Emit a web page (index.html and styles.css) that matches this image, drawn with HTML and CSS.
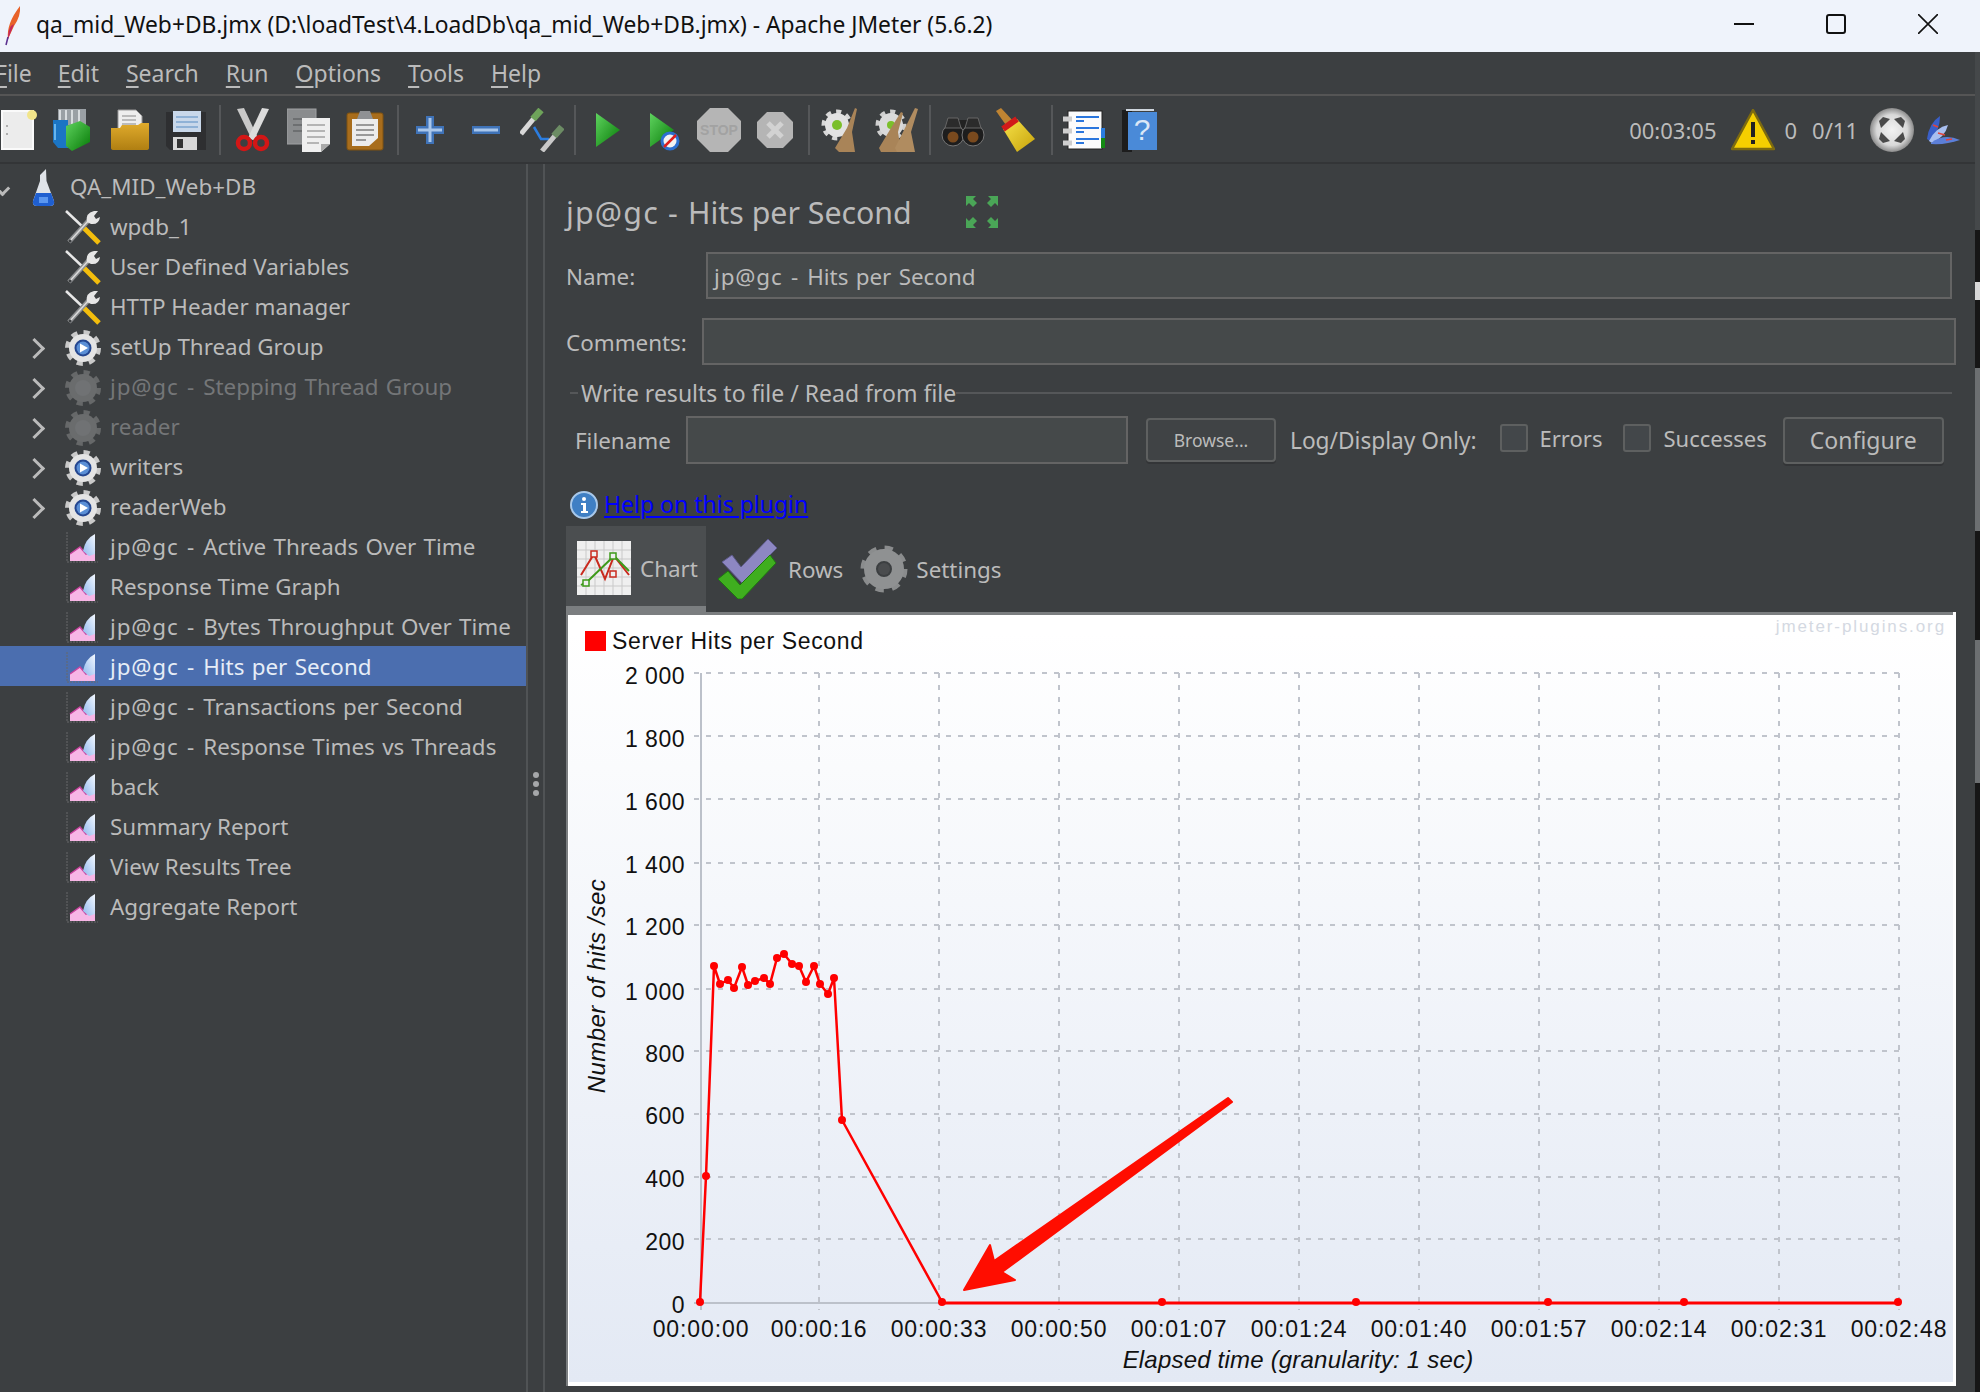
FILE: index.html
```html
<!DOCTYPE html>
<html lang="en">
<head>
	<meta charset="UTF-8">
	<title>qa_mid_Web+DB.jmx - Apache JMeter (5.6.2)</title>
	<link rel="stylesheet" href="styles.css">
</head>
<body>
<svg class="defs" width="0" height="0">
	<defs>
		<linearGradient id="gChart" x1="0" y1="0" x2="0" y2="1"><stop offset="0" stop-color="#fff"/><stop offset="1" stop-color="#e3e9f4"/></linearGradient>
		<linearGradient id="gGreen" x1="0" y1="0" x2="1" y2="1"><stop offset="0" stop-color="#5fd35f"/><stop offset="1" stop-color="#067a06"/></linearGradient>
		<linearGradient id="gFolder" x1="0" y1="0" x2="0" y2="1"><stop offset="0" stop-color="#e0ab2c"/><stop offset="1" stop-color="#b07f12"/></linearGradient>
		<linearGradient id="gFeather" x1="0" y1="1" x2="1" y2="0"><stop offset="0" stop-color="#8fb8ee"/><stop offset="1" stop-color="#f4f8ff"/></linearGradient>
		<radialGradient id="gBall"><stop offset="0" stop-color="#f2f2f2"/><stop offset=".7" stop-color="#d8d8d8"/><stop offset="1" stop-color="#8b8b8b"/></radialGradient>
		<linearGradient id="gBroom" x1="0" y1="0" x2="1" y2="1"><stop offset="0" stop-color="#f7e34a"/><stop offset="1" stop-color="#c7a20a"/></linearGradient>

		<symbol id="i-flask" viewBox="0 0 25 38">
			<path d="M15 0 L15.5 12 L23 32 Q24 37 19 37 H6 Q1 37 2 32 L9 12 V6 Z" fill="#dfe3e8"/>
			<path d="M5 24 H20 L23 32 Q24 37 19 37 H6 Q1 37 2 32 Z" fill="#1f5fd0"/>
			<path d="M8 28 h9 v6 h-9z" fill="#5b97ef"/>
		</symbol>
		<symbol id="i-tools" viewBox="0 0 36 36">
			<path d="M1 1 L20 19" stroke="#e8e8e8" stroke-width="2.5"/>
			<path d="M19 18 L34 33" stroke="#f3bd0c" stroke-width="5"/>
			<path d="M4 32 L24 10" stroke="#8d8f91" stroke-width="4.5"/>
			<path d="M4 32 L24 10" stroke="#dcdcdc" stroke-width="1.5"/>
			<path d="M22 12 Q20 3 29 1 L33 1 L29 6 L31 9 L35 7 Q34 15 26 14 Z" fill="#e6e6e6"/>
			<circle cx="5" cy="31" r="1.5" fill="#3c3f41"/>
		</symbol>
		<symbol id="i-gear" viewBox="0 0 36 36">
			<circle cx="18" cy="18" r="15.5" fill="none" stroke="#c9c9c9" stroke-width="5" stroke-dasharray="6.09 6.09"/>
			<circle cx="18" cy="18" r="14" fill="#e4e4e4"/>
			<circle cx="18" cy="18" r="8.5" fill="#24468f"/>
			<circle cx="18" cy="18" r="6.5" fill="#5a8fd6"/>
			<path d="M15 13.5 L23 18 L15 22.5 Z" fill="#fff"/>
		</symbol>
		<symbol id="i-gear-off" viewBox="0 0 36 36">
			<circle cx="18" cy="18" r="15.5" fill="none" stroke="#666869" stroke-width="5" stroke-dasharray="6.09 6.09"/>
			<circle cx="18" cy="18" r="14" fill="#6a6c6d"/>
			<circle cx="18" cy="18" r="8" fill="#707274"/>
		</symbol>
		<symbol id="i-graph" viewBox="0 0 36 36">
			<path d="M2 2 V32 H33" fill="none" stroke="#66686a" stroke-width="1" stroke-dasharray="2 1"/>
			<path d="M5 31 V24 L15 17 L21 24 L30 20 V31 Z" fill="#f7b6e6"/>
			<path d="M5 24 L15 17 L21 24 L30 20" fill="none" stroke="#c9439f" stroke-width="1.5"/>
			<path d="M18 21 Q20 9 30 4 V24 L24 26 Z" fill="url(#gFeather)"/>
		</symbol>

		<symbol id="t-new" viewBox="0 0 44 44">
			<rect x="5" y="3" width="31" height="38" fill="#ececec" stroke="#fafafa" stroke-width="2"/>
			<circle cx="35" cy="7" r="5" fill="#f2e58a"/>
			<circle cx="10" cy="18" r="1" fill="#999"/><circle cx="10" cy="26" r="1" fill="#999"/>
		</symbol>
		<symbol id="t-templates" viewBox="0 0 44 44">
			<rect x="8" y="1" width="28" height="16" fill="#9aa0a5"/>
			<path d="M10 2v14M16 2v14M22 2v14M29 2v14" stroke="#d8dcdf" stroke-width="2"/>
			<path d="M3 12 L18 12 L18 40 L8 40 L3 34 Z" fill="#1b75c4"/>
			<path d="M5 16 V32" stroke="#66b5ef" stroke-width="2"/>
			<path d="M16 18 L30 13 L40 19 V34 L22 43 L16 38 Z" fill="url(#gGreen)"/>
		</symbol>
		<symbol id="t-open" viewBox="0 0 44 44">
			<path d="M10 2 H28 L34 8 V24 H10 Z" fill="#eee" stroke="#999"/>
			<path d="M14 8h14M14 12h14M14 16h14" stroke="#aaa" stroke-width="1.5"/>
			<path d="M3 40 L3 20 H12 L14 17 H30 L33 15 H41 V40 Q41 42 38 42 H6 Q3 42 3 40 Z" fill="url(#gFolder)"/>
		</symbol>
		<symbol id="t-save" viewBox="0 0 44 44">
			<path d="M2 4 H42 V42 H6 L2 38 Z" fill="#2e2f31"/>
			<rect x="9" y="3" width="28" height="21" fill="#c9d8ea"/>
			<path d="M12 9h22M12 14h22M12 19h22" stroke="#7ea5cf" stroke-width="1.5"/>
			<rect x="9" y="29" width="24" height="13" fill="#d8d8d8"/>
			<rect x="13" y="31" width="6" height="9" fill="#333"/>
		</symbol>
		<symbol id="t-cut" viewBox="0 0 44 44">
			<path d="M6 1 L13 0 L27 30 L21 32 Z" fill="#c9c9c9"/>
			<path d="M38 1 L31 0 L17 30 L23 32 Z" fill="#dcdcdc"/>
			<circle cx="13" cy="35" r="6" fill="none" stroke="#d31616" stroke-width="4.5"/>
			<circle cx="30" cy="35" r="6" fill="none" stroke="#d31616" stroke-width="4.5"/>
		</symbol>
		<symbol id="t-copy" viewBox="0 0 44 44">
			<rect x="0" y="1" width="29" height="35" fill="#8a8c8e" stroke="#9fa1a3"/>
			<path d="M6 11h16M6 17h16M6 23h16" stroke="#6d6f71" stroke-width="2"/>
			<path d="M15 10 H43 V36 L34 44 H15 Z" fill="#efefef"/>
			<path d="M20 17h18M20 23h18M20 29h18M20 35h12" stroke="#b5b5b5" stroke-width="2"/>
			<path d="M34 44 V36 H43 Z" fill="#aaa"/>
		</symbol>
		<symbol id="t-paste" viewBox="0 0 44 44">
			<rect x="4" y="5" width="36" height="37" rx="2" fill="#a86d1c" stroke="#7f5210"/>
			<path d="M9 11 H35 V30 L26 38 H9 Z" fill="#ececec"/>
			<path d="M13 17h18M13 22h18M13 27h18M13 32h10" stroke="#999" stroke-width="2"/>
			<path d="M14 11 L17 3 H27 L30 11 Z" fill="#8f9194"/>
		</symbol>
		<symbol id="t-plus" viewBox="0 0 44 44">
			<path d="M22 8 V36 M8 22 H36" stroke="#3f73b8" stroke-width="8"/>
			<path d="M22 10 V34 M10 22 H34" stroke="#a9c6ea" stroke-width="3"/>
		</symbol>
		<symbol id="t-minus" viewBox="0 0 44 44">
			<path d="M8 22 H36" stroke="#3f73b8" stroke-width="8"/>
			<path d="M10 22 H34" stroke="#a9c6ea" stroke-width="3"/>
		</symbol>
		<symbol id="t-toggle" viewBox="0 0 44 44">
			<path d="M1 26 L15 9" stroke="#d8d8d8" stroke-width="5"/>
			<path d="M13 11 L21 2" stroke="#6ea35a" stroke-width="7"/>
			<path d="M14 19 L21 31 H29" fill="none" stroke="#2b7de0" stroke-width="2.5"/>
			<path d="M22 43 L38 24" stroke="#c9c9c9" stroke-width="5"/>
			<path d="M34 28 L42 19" stroke="#6c8c64" stroke-width="7"/>
		</symbol>
		<symbol id="t-run" viewBox="0 0 44 44">
			<path d="M10 5 L34 22 L10 39 Z" fill="url(#gGreen)"/>
		</symbol>
		<symbol id="t-runnp" viewBox="0 0 44 44">
			<path d="M8 5 L32 22 L8 39 Z" fill="url(#gGreen)"/>
			<circle cx="28" cy="33" r="8" fill="#f2f2f2" stroke="#2c6fd0" stroke-width="3"/>
			<path d="M22 39 L34 27" stroke="#e01e1e" stroke-width="2.5"/>
		</symbol>
		<symbol id="t-stop" viewBox="0 0 44 44">
			<path d="M13 0 H31 L44 13 V31 L31 44 H13 L0 31 V13 Z" fill="#b5b5b5"/>
			<text x="22" y="27" text-anchor="middle" class="stop-label">STOP</text>
		</symbol>
		<symbol id="t-shut" viewBox="0 0 44 44">
			<path d="M14 4 H30 L40 14 V30 L30 40 H14 L4 30 V14 Z" fill="#b5b5b5"/>
			<path d="M15 15 L29 29 M29 15 L15 29" stroke="#d2d2d2" stroke-width="5"/>
		</symbol>
		<symbol id="t-clear" viewBox="0 0 44 44">
			<circle cx="18" cy="17" r="13" fill="none" stroke="#d8d8d8" stroke-width="5" stroke-dasharray="5 5"/>
			<circle cx="18" cy="17" r="12" fill="#e2e2e2"/>
			<circle cx="18" cy="17" r="5" fill="#7bbf2a"/>
			<path d="M16 40 L28 20 L36 0 L38 1 L33 24 L36 44 H20 Z" fill="#a98458"/>
		</symbol>
		<symbol id="t-clearall" viewBox="0 0 44 44">
			<circle cx="16" cy="17" r="13" fill="none" stroke="#cfcfcf" stroke-width="5" stroke-dasharray="5 5"/>
			<circle cx="16" cy="17" r="12" fill="#dadada"/>
			<circle cx="16" cy="17" r="4" fill="#7bbf2a"/>
			<path d="M4 40 L16 20 L26 4 L28 5 L23 24 L26 44 H6 Z" fill="#a98458"/>
			<path d="M20 40 L30 20 L40 0 L43 1 L36 24 L40 44 H22 Z" fill="#b08c60"/>
		</symbol>
		<symbol id="t-binoc" viewBox="0 0 44 44">
			<path d="M16 12 H28 V26 H16 Z" fill="#222"/>
			<circle cx="12" cy="27" r="11" fill="#1d1d1d" stroke="#777" stroke-width="1"/>
			<circle cx="32" cy="27" r="11" fill="#1d1d1d" stroke="#777" stroke-width="1"/>
			<path d="M7 10 H17 L20 20 H4 Z M27 10 H37 L40 20 H24 Z" fill="#2b2b2b" stroke="#666" stroke-width="1"/>
			<circle cx="12" cy="29" r="5.5" fill="#7a4a1e"/><circle cx="32" cy="29" r="5.5" fill="#7a4a1e"/>
		</symbol>
		<symbol id="t-broom" viewBox="0 0 44 44">
			<path d="M3 3 L8 0 L22 15 L15 20 Z" fill="#bf8432"/>
			<path d="M10 21 L24 11 L42 31 L24 44 Z" fill="url(#gBroom)"/>
			<path d="M10 21 L24 11" stroke="#d11a1a" stroke-width="6"/>
		</symbol>
		<symbol id="t-log" viewBox="0 0 44 44">
			<rect x="6" y="3" width="34" height="38" fill="#fbfbfb" stroke="#222"/>
			<rect x="39" y="20" width="4" height="10" fill="#2b7de0"/><rect x="39" y="30" width="4" height="10" fill="#138a13"/>
			<path d="M1 11h9M1 23h9M1 35h9" stroke="#cfcfcf" stroke-width="5"/>
			<path d="M14 9h23M14 13h8M14 20h23M14 24h8M14 31h23M14 35h8" stroke="#2a76dd" stroke-width="2"/>
		</symbol>
		<symbol id="t-help" viewBox="0 0 44 44">
			<rect x="4" y="2" width="10" height="42" fill="#1d1d1d"/>
			<rect x="10" y="4" width="29" height="38" fill="#4a8ad8"/>
			<path d="M8 2 H36" stroke="#cfd6de" stroke-width="2"/>
			<text x="24" y="32" text-anchor="middle" class="help-label">?</text>
		</symbol>
	</defs>
</svg>

<div class="window">
	<header class="titlebar">
		<svg class="logo" width="16" height="40" viewBox="0 0 16 40">
			<path d="M15 0 Q16 10 9 20 L3 33 Q1 18 15 0 Z" fill="#e8622a"/>
			<path d="M9 18 L3 33 Q3 24 6 20 Z" fill="#c2275e"/>
			<path d="M3 31 L1 39" stroke="#5a2f8f" stroke-width="1.5"/>
		</svg>
		<span class="app-title">qa_mid_Web+DB.jmx (D:\loadTest\4.LoadDb\qa_mid_Web+DB.jmx) - Apache JMeter (5.6.2)</span>
		<div class="win-btns">
			<svg width="20" height="20" viewBox="0 0 20 20"><path d="M0 10 H20" stroke="#111" stroke-width="2"/></svg>
			<svg width="20" height="20" viewBox="0 0 20 20"><rect x="1" y="1" width="18" height="18" rx="2" fill="none" stroke="#111" stroke-width="2"/></svg>
			<svg width="20" height="20" viewBox="0 0 20 20"><path d="M0 0 L20 20 M20 0 L0 20" stroke="#111" stroke-width="1.6"/></svg>
		</div>
	</header>

	<nav class="menubar">
		<span class="menu-file"><u>F</u>ile</span>
		<span><u>E</u>dit</span>
		<span><u>S</u>earch</span>
		<span><u>R</u>un</span>
		<span><u>O</u>ptions</span>
		<span><u>T</u>ools</span>
		<span><u>H</u>elp</span>
	</nav>

	<div class="toolbar">
		<svg class="tb-btn"><use href="#t-new" x="6" width="44" height="44"/></svg>
		<svg class="tb-btn"><use href="#t-templates" x="3" width="44" height="44"/></svg>
		<svg class="tb-btn"><use href="#t-open" x="5" width="44" height="44"/></svg>
		<svg class="tb-btn"><use href="#t-save" x="5" width="44" height="44"/></svg>
		<i class="tb-sep"></i>
		<svg class="tb-btn"><use href="#t-cut" x="6" width="44" height="44"/></svg>
		<svg class="tb-btn"><use href="#t-copy" x="6" width="44" height="44"/></svg>
		<svg class="tb-btn"><use href="#t-paste" x="6" width="44" height="44"/></svg>
		<i class="tb-sep"></i>
		<svg class="tb-btn"><use href="#t-plus" x="6" width="44" height="44"/></svg>
		<svg class="tb-btn"><use href="#t-minus" x="6" width="44" height="44"/></svg>
		<svg class="tb-btn"><use href="#t-toggle" x="6" width="44" height="44"/></svg>
		<i class="tb-sep"></i>
		<svg class="tb-btn"><use href="#t-run" x="6" width="44" height="44"/></svg>
		<svg class="tb-btn"><use href="#t-runnp" x="6" width="44" height="44"/></svg>
		<svg class="tb-btn"><use href="#t-stop" x="5" width="44" height="44"/></svg>
		<svg class="tb-btn"><use href="#t-shut" x="5" width="44" height="44"/></svg>
		<i class="tb-sep"></i>
		<svg class="tb-btn"><use href="#t-clear" x="6" width="44" height="44"/></svg>
		<svg class="tb-btn"><use href="#t-clearall" x="6" width="44" height="44"/></svg>
		<i class="tb-sep"></i>
		<svg class="tb-btn"><use href="#t-binoc" x="6" width="44" height="44"/></svg>
		<svg class="tb-btn"><use href="#t-broom" x="2" width="44" height="44"/></svg>
		<i class="tb-sep"></i>
		<svg class="tb-btn"><use href="#t-log" x="6" width="44" height="44"/></svg>
		<svg class="tb-btn"><use href="#t-help" x="6" width="44" height="44"/></svg>

		<div class="status">
			<span class="timer">00:03:05</span>
			<svg class="warn" width="44" height="42" viewBox="0 0 44 42">
				<path d="M22 1 L43 40 H1 Z" fill="#f5cf00" stroke="#7c6a10" stroke-width="2.5" stroke-linejoin="round"/>
				<path d="M22 13 V28" stroke="#222" stroke-width="4"/><rect x="20" y="31" width="4" height="4" fill="#222"/>
			</svg>
			<span class="err-count">0</span>
			<span class="thread-count">0/11</span>
			<svg class="ball" width="44" height="44" viewBox="0 0 44 44">
				<circle cx="22" cy="22" r="22" fill="url(#gBall)"/>
				<path d="M13 9 L20 11 L11 20 L9 13 Z M31 9 L24 11 L33 20 L35 13 Z M13 35 L20 33 L11 24 L9 31 Z M31 35 L24 33 L33 24 L35 31 Z" fill="#4a4a4a"/>
			</svg>
			<svg class="feather" width="34" height="30" viewBox="0 0 34 30">
				<path d="M1 24 Q3 8 14 1 Q14 14 5 27 Z" fill="#3a5fc8"/>
				<path d="M3 26 Q10 12 22 10 Q19 22 6 28 Z" fill="#a9bff0"/>
				<path d="M5 28 Q18 18 34 25 Q20 30 5 29 Z" fill="#5c7fd8"/>
				<path d="M7 10 L12 12 M12 18 L19 20 M20 25 L26 24" stroke="#e2433a" stroke-width="1.5"/>
			</svg>
		</div>
	</div>

	<div class="workspace">
		<aside class="tree">
			<div class="row"><span class="root-slot"><span class="root-check"></span></span><svg class="flask" width="25" height="38"><use href="#i-flask"/></svg><span>QA_MID_Web+DB</span></div>
			<div class="row"><span class="slot"></span><svg class="ic"><use href="#i-tools"/></svg><span>wpdb_1</span></div>
			<div class="row"><span class="slot"></span><svg class="ic"><use href="#i-tools"/></svg><span>User Defined Variables</span></div>
			<div class="row"><span class="slot"></span><svg class="ic"><use href="#i-tools"/></svg><span>HTTP Header manager</span></div>
			<div class="row"><span class="slot"><i class="chev"></i></span><svg class="ic"><use href="#i-gear"/></svg><span>setUp Thread Group</span></div>
			<div class="row off"><span class="slot"><i class="chev"></i></span><svg class="ic"><use href="#i-gear-off"/></svg><span><span class="jp">jp@gc - </span>Stepping Thread Group</span></div>
			<div class="row off"><span class="slot"><i class="chev"></i></span><svg class="ic"><use href="#i-gear-off"/></svg><span>reader</span></div>
			<div class="row"><span class="slot"><i class="chev"></i></span><svg class="ic"><use href="#i-gear"/></svg><span>writers</span></div>
			<div class="row"><span class="slot"><i class="chev"></i></span><svg class="ic"><use href="#i-gear"/></svg><span>readerWeb</span></div>
			<div class="row"><span class="slot"></span><svg class="ic"><use href="#i-graph"/></svg><span><span class="jp">jp@gc - </span>Active Threads Over Time</span></div>
			<div class="row"><span class="slot"></span><svg class="ic"><use href="#i-graph"/></svg><span>Response Time Graph</span></div>
			<div class="row"><span class="slot"></span><svg class="ic"><use href="#i-graph"/></svg><span><span class="jp">jp@gc - </span>Bytes Throughput Over Time</span></div>
			<div class="row selected"><span class="slot"></span><svg class="ic"><use href="#i-graph"/></svg><span><span class="jp">jp@gc - </span>Hits per Second</span></div>
			<div class="row"><span class="slot"></span><svg class="ic"><use href="#i-graph"/></svg><span><span class="jp">jp@gc - </span>Transactions per Second</span></div>
			<div class="row"><span class="slot"></span><svg class="ic"><use href="#i-graph"/></svg><span><span class="jp">jp@gc - </span>Response Times vs Threads</span></div>
			<div class="row"><span class="slot"></span><svg class="ic"><use href="#i-graph"/></svg><span>back</span></div>
			<div class="row"><span class="slot"></span><svg class="ic"><use href="#i-graph"/></svg><span>Summary Report</span></div>
			<div class="row"><span class="slot"></span><svg class="ic"><use href="#i-graph"/></svg><span>View Results Tree</span></div>
			<div class="row"><span class="slot"></span><svg class="ic"><use href="#i-graph"/></svg><span>Aggregate Report</span></div>
		</aside>

		<div class="splitter"><i></i><i></i><i></i></div>

		<main class="panel">
			<div class="panel-title">
				<span><span class="jp">jp@gc - </span>Hits per Second</span>
				<svg width="32" height="32" viewBox="0 0 32 32">
					<path d="M0 0 H10 L7 3 L11 7 L7 11 L3 7 L0 10 Z M32 0 H22 L25 3 L21 7 L25 11 L29 7 L32 10 Z M0 32 H10 L7 29 L11 25 L7 21 L3 25 L0 22 Z M32 32 H22 L25 29 L21 25 L25 21 L29 25 L32 22 Z" fill="#4aa657"/>
				</svg>
			</div>
			<div class="field name-row">
				<label>Name:</label>
				<div class="input"><span><span class="jp">jp@gc - </span>Hits per Second</span></div>
			</div>
			<div class="field comments-row">
				<label>Comments:</label>
				<div class="input"></div>
			</div>
			<div class="group-title">
				<i class="dash"></i>
				<span>Write results to file / Read from file</span>
				<i class="rule"></i>
			</div>
			<div class="file-row">
				<label class="file-label">Filename</label>
				<div class="input file-input"></div>
				<button class="btn btn-small" type="button">Browse...</button>
				<span class="log-label">Log/Display Only:</span>
				<i class="check"></i><span class="check-label">Errors</span>
				<i class="check"></i><span class="check-label">Successes</span>
				<button class="btn btn-config" type="button">Configure</button>
			</div>
			<div class="help-row">
				<svg width="28" height="28" viewBox="0 0 28 28">
					<circle cx="14" cy="14" r="13" fill="#3f7fc4" stroke="#a8c8ea" stroke-width="2"/>
					<circle cx="14" cy="8" r="2" fill="#fff"/><path d="M11 12 H16 V20 H18 V22 H11 V20 H13 V14 H11 Z" fill="#fff"/>
				</svg>
				<a class="help-link" href="#">Help on this plugin</a>
			</div>
			<div class="tabs">
				<div class="tab active">
					<svg width="54" height="54" viewBox="0 0 54 54">
						<rect width="54" height="54" fill="#efefef"/>
						<path d="M9 0V54M18 0V54M27 0V54M36 0V54M45 0V54M0 9H54M0 18H54M0 27H54M0 36H54M0 45H54" stroke="#c9c9c9"/>
						<path d="M4 34 L17 13 L28 38 L37 15 L52 34" fill="none" stroke="#c92a1e" stroke-width="2"/>
						<path d="M4 44 L11 40 L37 15 L52 30" fill="none" stroke="#3e9a1a" stroke-width="2"/>
						<rect x="14" y="10" width="6" height="6" fill="#eee" stroke="#c92a1e" stroke-width="1.5"/>
						<rect x="33" y="12" width="6" height="6" fill="#eee" stroke="#3e9a1a" stroke-width="1.5"/>
						<rect x="33" y="30" width="6" height="6" fill="#eee" stroke="#c92a1e" stroke-width="1.5"/>
						<rect x="6" y="39" width="6" height="6" fill="#eee" stroke="#3e9a1a" stroke-width="1.5"/>
					</svg>
					<span>Chart</span>
				</div>
				<div class="tab tab-rows">
					<svg width="60" height="60" viewBox="0 0 60 60">
						<path d="M4 23 L14 16 L23 28 L50 0 L59 9 L24 44 Z" fill="#8d87c2" stroke="#5d5a8a"/>
						<path d="M0 40 L10 32 L22 46 L52 16 L58 24 L24 60 L20 60 Z" fill="#3fae1f" stroke="#1f7a10"/>
					</svg>
					<span>Rows</span>
				</div>
				<div class="tab tab-settings">
					<svg width="48" height="48" viewBox="0 0 48 48">
						<circle cx="24" cy="24" r="20" fill="none" stroke="#8a8c8d" stroke-width="7" stroke-dasharray="7.85 7.85"/>
						<circle cx="24" cy="24" r="14" fill="none" stroke="#8f9192" stroke-width="12"/>
						<circle cx="24" cy="24" r="6" fill="#4a4c4e"/>
					</svg>
					<span>Settings</span>
				</div>
			</div>

			<svg class="chart" width="1390" height="774" viewBox="566 612 1390 774">
				<rect x="566" y="612" width="1390" height="774" fill="#fff"/>
				<rect x="569" y="632" width="1384" height="750" fill="url(#gChart)"/>
				<rect x="566" y="612" width="1387" height="3" fill="#7b7e80"/>
				<rect x="566" y="612" width="2" height="774" fill="#7b7e80"/>

				<g class="grid">
					<path d="M694 673H1899M694 736H1899M694 799H1899M694 863H1899M694 925H1899M694 989H1899M694 1051H1899M694 1114H1899M694 1177H1899M694 1239H1899"/>
					<path d="M819 673V1310M939 673V1310M1059 673V1310M1179 673V1310M1299 673V1310M1419 673V1310M1539 673V1310M1659 673V1310M1779 673V1310M1899 673V1310"/>
				</g>
				<path class="axis" d="M701 673V1310M694 1303H1899"/>

				<text class="legend" x="612" y="649">Server Hits per Second</text>
				<rect x="585" y="631" width="21" height="20" fill="#f00"/>
				<text class="brand" x="1946" y="632" text-anchor="end">jmeter-plugins.org</text>

				<g class="ylabels" text-anchor="end">
					<text x="685" y="684">2 000</text>
					<text x="685" y="747">1 800</text>
					<text x="685" y="810">1 600</text>
					<text x="685" y="873">1 400</text>
					<text x="685" y="935">1 200</text>
					<text x="685" y="1000">1 000</text>
					<text x="685" y="1062">800</text>
					<text x="685" y="1124">600</text>
					<text x="685" y="1187">400</text>
					<text x="685" y="1250">200</text>
					<text x="685" y="1313">0</text>
				</g>
				<g class="xlabels" text-anchor="middle">
					<text x="701" y="1337">00:00:00</text>
					<text x="819" y="1337">00:00:16</text>
					<text x="939" y="1337">00:00:33</text>
					<text x="1059" y="1337">00:00:50</text>
					<text x="1179" y="1337">00:01:07</text>
					<text x="1299" y="1337">00:01:24</text>
					<text x="1419" y="1337">00:01:40</text>
					<text x="1539" y="1337">00:01:57</text>
					<text x="1659" y="1337">00:02:14</text>
					<text x="1779" y="1337">00:02:31</text>
					<text x="1899" y="1337">00:02:48</text>
				</g>
				<text class="axis-title" x="1298" y="1368" text-anchor="middle">Elapsed time (granularity: 1 sec)</text>
				<text class="axis-title y-title" transform="translate(605 986) rotate(-90)" text-anchor="middle">Number of hits /sec</text>

				<polyline class="line" points="700,1302 706,1176 714,966 720,984 728,980 734,988 742,967 748,985 755,981 764,978 770,984 777,958 784,954 792,964 799,966 806,982 814,966 820,984 828,994 834,978 842,1120 942,1302"/>
				<path class="baseline" d="M942 1303H1899"/>
				<g fill="#f00">
					<circle cx="700" cy="1302" r="4"/><circle cx="706" cy="1176" r="4"/><circle cx="714" cy="966" r="4"/><circle cx="720" cy="984" r="4"/>
					<circle cx="728" cy="980" r="4"/><circle cx="734" cy="988" r="4"/><circle cx="742" cy="967" r="4"/><circle cx="748" cy="985" r="4"/>
					<circle cx="755" cy="981" r="4"/><circle cx="764" cy="978" r="4"/><circle cx="770" cy="984" r="4"/><circle cx="777" cy="958" r="4"/>
					<circle cx="784" cy="954" r="4"/><circle cx="792" cy="964" r="4"/><circle cx="799" cy="966" r="4"/><circle cx="806" cy="982" r="4"/>
					<circle cx="814" cy="966" r="4"/><circle cx="820" cy="984" r="4"/><circle cx="828" cy="994" r="4"/><circle cx="834" cy="978" r="4"/>
					<circle cx="842" cy="1120" r="4"/><circle cx="942" cy="1302" r="4"/><circle cx="1162" cy="1302" r="4"/><circle cx="1356" cy="1302" r="4"/>
					<circle cx="1548" cy="1302" r="4"/><circle cx="1684" cy="1302" r="4"/><circle cx="1898" cy="1302" r="4"/>
				</g>
				<path d="M1228 1098 L1232 1102 L1002 1272 L1015 1280 L964 1290 L990 1245 L994 1261 Z" fill="#ff0d00" stroke="#ff0d00" stroke-width="2" stroke-linejoin="round"/>
			</svg>
		</main>
	</div>
</div>
<div class="edge"></div>
</body>
</html>
```

FILE: styles.css
```css
html, body {
	margin: 0;
	height: 1392px;
	overflow: hidden;
}
body {
	display: flex;
	background: #3c3f41;
	color: #bbbbbb;
	font-family: "Noto Sans", "Open Sans", sans-serif;
	font-size: 22.4px;
}
.defs {
	position: absolute;
}
.window {
	width: 1975px;
	flex: none;
}
.edge {
	flex: 1;
	background: linear-gradient(to bottom,
		#eff3fb 0, #eff3fb 52px,
		#45484a 52px, #45484a 230px,
		#161616 230px, #161616 282px,
		#d8d8d8 282px, #d8d8d8 300px,
		#161616 300px, #161616 368px,
		#6c6f71 368px, #6c6f71 531px,
		#161616 531px, #161616 640px,
		#6c6f71 640px, #6c6f71 783px,
		#161616 783px);
}
/* the prefix runs wider in the original font */
.jp {
	letter-spacing: .04em;
}
.row > span:has(.jp), .input > span {
	word-spacing: 1.5px;
}

/* title bar */
.titlebar {
	height: 52px;
	background: #eff3fb;
	color: #111;
	display: flex;
	align-items: center;
}
.logo {
	margin-left: 5px;
	margin-right: 15px;
}
.app-title {
	font-size: 22.8px;
	margin-bottom: 3px;
}
.win-btns {
	margin-left: auto;
	margin-right: 37px;
	margin-bottom: 4px;
	display: flex;
	gap: 72px;
}

/* menu */
.menubar {
	height: 42px;
	display: flex;
	align-items: center;
	border-bottom: 2px solid #555555;
	font-size: 23px;
}
.menubar span {
	margin-right: 27px;
}
.menubar .menu-file {
	margin-left: -5px;
	margin-right: 26px;
}
.menubar u {
	text-underline-offset: 4px;
}

/* toolbar */
.toolbar {
	height: 68px;
	display: flex;
	align-items: center;
	margin-left: -9px;
	padding-top: 2px;
	border-bottom: 2px solid #333537;
	box-sizing: border-box;
}
.tb-btn {
	width: 56px;
	height: 44px;
	flex: none;
}
.tb-sep {
	width: 2px;
	height: 50px;
	margin: 0 3.5px 0 4px;
	background: #555759;
}
.status {
	margin-left: auto;
	display: flex;
	align-items: center;
	font-size: 22px;
}
.timer {
	margin-right: 15px;
}
.err-count {
	margin-left: 9px;
	margin-right: 15px;
}
.thread-count {
	margin-right: 12px;
}
.feather {
	margin-left: 12px;
	margin-right: 15px;
}
.warn, .ball {
	flex: none;
}

/* left tree */
.workspace {
	display: flex;
	height: 1228px;
}
.tree {
	width: 526px;
	flex: none;
	padding-top: 2px;
	box-sizing: border-box;
}
.row {
	height: 40px;
	padding-top: 4px;
	box-sizing: border-box;
	display: flex;
	align-items: center;
	white-space: nowrap;
}
.row > span:last-child {
	margin-bottom: 3px;
}
.row.off {
	color: #747678;
}
.row.selected {
	background: #4b6eaf;
	color: #e6edf7;
}
.slot {
	width: 65px;
	flex: none;
	padding-left: 31px;
	box-sizing: border-box;
}
.root-slot {
	width: 31px;
	flex: none;
}
.root-check {
	display: block;
	width: 8px;
	height: 8px;
	margin-left: -3px;
	border-right: 3px solid #bbbbbb;
	border-bottom: 3px solid #bbbbbb;
	transform: rotate(45deg);
}
.chev {
	display: block;
	width: 12px;
	height: 12px;
	margin-left: -4px;
	border-right: 3px solid #bbbbbb;
	border-top: 3px solid #bbbbbb;
	transform: rotate(45deg);
}
.flask {
	margin-right: 14px;
	flex: none;
}
.ic {
	width: 36px;
	height: 36px;
	margin-right: 9px;
	flex: none;
}
.splitter {
	width: 19px;
	flex: none;
	border-left: 2px solid #505355;
	border-right: 2px solid #505355;
	box-sizing: border-box;
	display: flex;
	flex-direction: column;
	align-items: center;
	justify-content: flex-start;
	gap: 3px;
	padding-top: 608px;
}
.splitter i {
	width: 6px;
	height: 6px;
	border-radius: 50%;
	background: #a5a7a9;
}

/* right panel */
.panel {
	flex: 1;
	padding-left: 21px;
	padding-right: 19px;
	display: flex;
	flex-direction: column;
}
.panel-title {
	margin-top: 24px;
	height: 48px;
	display: flex;
	align-items: center;
	gap: 54px;
	font-size: 30.3px;
}
.input {
	flex: 1;
	height: 47px;
	box-sizing: border-box;
	background: #45494a;
	border: 2px solid #646464;
	display: flex;
	align-items: center;
	padding-left: 6px;
	padding-top: 2px;
}
.field {
	display: flex;
	align-items: center;
}
.field label {
	flex: none;
	padding-top: 2px;
}
.name-row {
	margin-top: 16px;
	margin-right: 4px;
}
.name-row label {
	width: 140px;
}
.comments-row {
	margin-top: 19px;
}
.comments-row label {
	width: 136px;
}
.group-title {
	margin-top: 15px;
	margin-right: 4px;
	height: 26px;
	display: flex;
	align-items: center;
	font-size: 23px;
}
.group-title .dash {
	width: 8px;
	height: 2px;
	margin-left: 4px;
	margin-right: 3px;
	background: #555759;
}
.group-title .rule {
	flex: 1;
	height: 2px;
	background: #555759;
}
.file-row {
	margin-top: 10px;
	height: 48px;
	display: flex;
	align-items: center;
}
.file-label {
	margin-left: 9px;
	width: 111px;
}
.file-input {
	flex: none;
	width: 442px;
	height: 48px;
}
.btn {
	box-sizing: border-box;
	background: #404345;
	border: 2px solid #5e6060;
	border-radius: 4px;
	color: #bbbbbb;
	font-family: "Noto Sans", "Open Sans", sans-serif;
	box-shadow: 0 2px 0 #333537;
}
.btn-small {
	width: 130px;
	height: 44px;
	margin-left: 18px;
	font-size: 17.5px;
}
.log-label {
	margin-left: 14px;
	margin-right: 23px;
	font-size: 22.7px;
}
.check {
	width: 28px;
	height: 28px;
	flex: none;
	box-sizing: border-box;
	border: 2px solid #5e6060;
	border-radius: 3px;
	background: #43474a;
	margin-top: -4px;
}
.check-label {
	margin-left: 12px;
	margin-right: 21px;
	margin-top: -4px;
	font-size: 22px;
}
.btn-config {
	width: 161px;
	height: 47px;
	margin-left: -5px;
	font-size: 23px;
}
.help-row {
	margin-top: 28px;
	height: 26px;
	display: flex;
	align-items: center;
	gap: 6px;
	padding-left: 4px;
}
.help-link {
	color: #0000ff;
	text-underline-offset: 3px;
	margin-bottom: 2px;
	font-size: 23px;
}
.tabs {
	margin-top: 8px;
	height: 86px;
	display: flex;
	align-items: stretch;
}
.tab {
	display: flex;
	align-items: center;
}
.tab.active {
	width: 140px;
	box-sizing: border-box;
	padding-left: 11px;
	padding-top: 4px;
	gap: 9px;
	background: #4b4e50;
	border-bottom: 6px solid #7b7e80;
}
.tab-rows {
	margin-left: 12px;
	gap: 10px;
}
.tab-settings {
	margin-left: 17px;
	gap: 8px;
}

/* chart */
.chart {
	display: block;
	flex: none;
	font-family: "Liberation Sans", Arial, sans-serif;
}
.grid path {
	fill: none;
	stroke: #c0c4cc;
	stroke-width: 2;
	stroke-dasharray: 5 7;
}
.axis {
	fill: none;
	stroke: #bcc1ca;
	stroke-width: 2;
}
.legend {
	font-size: 23px;
	letter-spacing: .63px;
	fill: #111;
}
.brand {
	font-size: 17px;
	letter-spacing: 1.9px;
	fill: #d4d9e2;
}
.ylabels text, .xlabels text {
	font-size: 23px;
	letter-spacing: .5px;
	fill: #111;
}
.xlabels text {
	letter-spacing: .9px;
}
.axis-title {
	font-size: 24px;
	letter-spacing: .2px;
	font-style: italic;
	fill: #111;
}
.y-title {
	letter-spacing: .4px;
}
.line {
	fill: none;
	stroke: #f00;
	stroke-width: 2.5;
}
.baseline {
	fill: none;
	stroke: #f00;
	stroke-width: 3;
}
.stop-label {
	font-family: "Liberation Sans", Arial, sans-serif;
	font-size: 14px;
	font-weight: bold;
	fill: #a2a2a2;
}
.help-label {
	font-family: "Liberation Sans", Arial, sans-serif;
	font-size: 30px;
	fill: #dbe7f7;
}
```
